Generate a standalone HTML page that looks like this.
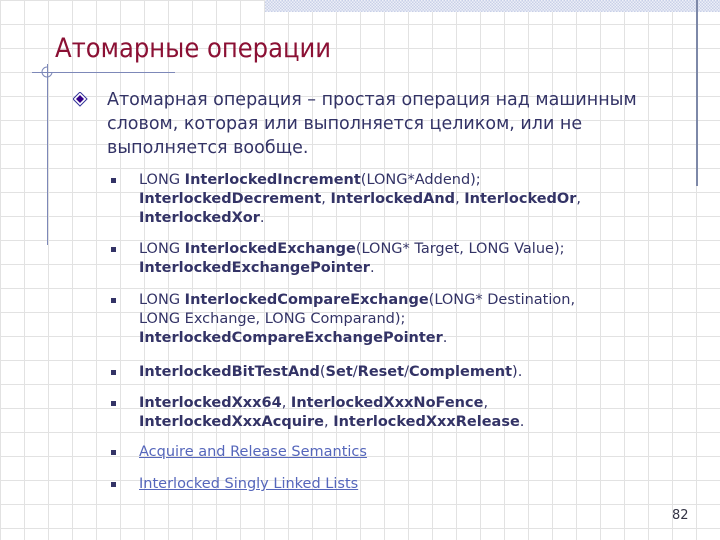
<!DOCTYPE html>
<html><head><meta charset="utf-8"><style>
body{margin:0;width:720px;height:540px;overflow:hidden;background:#fff;position:relative;font-family:"DejaVu Sans",sans-serif;color:#333366}
.grid{position:absolute;left:0;top:0;width:720px;height:540px;
background-image:repeating-linear-gradient(to right,#e2e2e2 0 1px,transparent 1px 24px),repeating-linear-gradient(to bottom,#e2e2e2 0 1px,transparent 1px 24px);background-position:0 0}
.band{position:absolute;left:265px;top:0;width:455px;height:12px;background:repeating-conic-gradient(#c8d0e8 0 25%,#eef0f8 0 50%) 0 0/3px 3px}
.abs{position:absolute}
.t{position:absolute;left:55px;top:33px;font-size:27px;color:#8b1034;font-family:"DejaVu Sans Condensed","DejaVu Sans",sans-serif;white-space:nowrap}
.main{position:absolute;left:107px;top:88px;font-size:17.5px;line-height:24px;white-space:nowrap}
.it{position:absolute;left:139px;font-size:14.5px;line-height:19px;white-space:nowrap}
.sq{position:absolute;left:111px;width:5px;height:5px;background:#333366}
b{font-weight:bold}
a{color:#5566bb;text-decoration:underline}
</style></head><body>
<div class="grid"></div>
<div class="band"></div>
<div class="abs" style="left:696px;top:0;width:2px;height:186px;background:#7d88a8"></div>
<div class="abs" style="left:32px;top:72px;width:143px;height:1px;background:#7d88b8"></div>
<div class="abs" style="left:47px;top:64px;width:1px;height:181px;background:#7d88b8"></div>
<svg class="abs" style="left:38px;top:63px" width="20" height="20"><path d="M9 4 A5 5 0 1 0 14 9" fill="none" stroke="#7d88b8"/></svg>
<div class="t">Атомарные операции</div>
<svg class="abs" style="left:73px;top:92px" width="15" height="15"><path d="M7 0 L14 7 L7 14 L0 7Z" fill="#fff" stroke="#333399"/><path d="M7 3 L11 7 L7 11 L3 7Z" fill="#330088"/></svg>
<div class="main">Атомарная операция – простая операция над машинным<br>словом, которая или выполняется целиком, или не<br>выполняется вообще.</div>
<div class="sq" style="top:178px"></div>
<div class="it" style="top:171px">LONG <b>InterlockedIncrement</b>(LONG*Addend);<br><b>InterlockedDecrement</b>, <b>InterlockedAnd</b>, <b>InterlockedOr</b>,<br><b>InterlockedXor</b>.</div>
<div class="sq" style="top:247px"></div>
<div class="it" style="top:240px">LONG <b>InterlockedExchange</b>(LONG* Target, LONG Value);<br><b>InterlockedExchangePointer</b>.</div>
<div class="sq" style="top:298px"></div>
<div class="it" style="top:291px">LONG <b>InterlockedCompareExchange</b>(LONG* Destination,<br>LONG Exchange, LONG Comparand);<br><b>InterlockedCompareExchangePointer</b>.</div>
<div class="sq" style="top:370px"></div>
<div class="it" style="top:363px"><b>InterlockedBitTestAnd</b>(<b>Set</b>/<b>Reset</b>/<b>Complement</b>).</div>
<div class="sq" style="top:401px"></div>
<div class="it" style="top:394px"><b>InterlockedXxx64</b>, <b>InterlockedXxxNoFence</b>,<br><b>InterlockedXxxAcquire</b>, <b>InterlockedXxxRelease</b>.</div>
<div class="sq" style="top:450px"></div>
<div class="it" style="top:443px"><a>Acquire and Release Semantics</a></div>
<div class="sq" style="top:482px"></div>
<div class="it" style="top:475px"><a>Interlocked Singly Linked Lists</a></div>
<div class="abs" style="left:672px;top:508px;font-size:13px;color:#333344">82</div>
</body></html>
